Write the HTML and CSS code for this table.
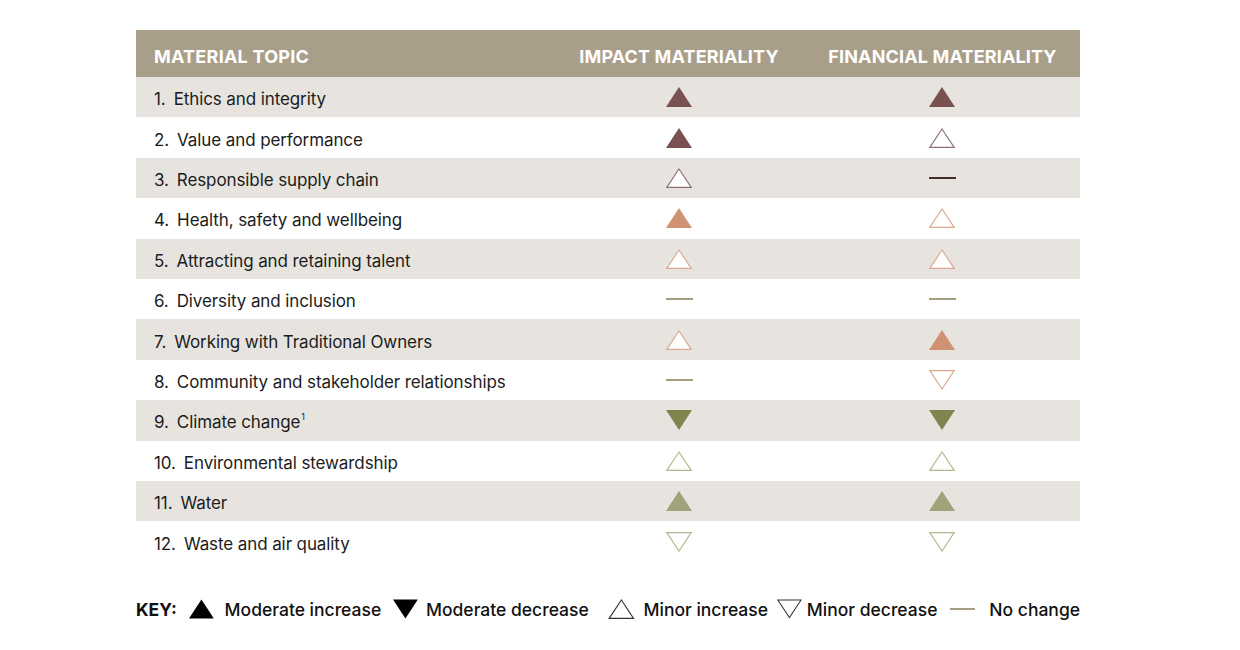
FILE: index.html
```html
<!DOCTYPE html>
<html lang="en">
<head>
<meta charset="utf-8">
<title>Material topics</title>
<link rel="stylesheet" href="styles.css">
</head>
<body>
<svg width="0" height="0" class="defs" aria-hidden="true">
  <defs>
    <symbol id="up-fill" viewBox="0 0 26 20"><polygon points="0,20 13,0 26,20" fill="currentColor"/></symbol>
    <symbol id="down-fill" viewBox="0 0 26 20"><polygon points="0,0 26,0 13,20" fill="currentColor"/></symbol>
    <symbol id="up-line" viewBox="0 0 26 20"><polygon points="0.8,19.4 13,1 25.2,19.4" fill="#fff" stroke="currentColor" stroke-width="1.1"/></symbol>
    <symbol id="down-line" viewBox="0 0 26 20"><polygon points="0.8,0.6 25.2,0.6 13,19" fill="#fff" stroke="currentColor" stroke-width="1.1"/></symbol>
  </defs>
</svg>
<div class="page">
  <div class="table">
    <div class="row head">
      <div class="topic">MATERIAL TOPIC</div>
      <div class="cell">IMPACT MATERIALITY</div>
      <div class="cell fin">FINANCIAL MATERIALITY</div>
    </div>

    <div class="row shade">
      <div class="topic"><span class="num">1.</span>Ethics and integrity</div>
      <div class="cell"><svg class="tri c-maroon"><use href="#up-fill"/></svg></div>
      <div class="cell fin"><svg class="tri c-maroon"><use href="#up-fill"/></svg></div>
    </div>
    <div class="row">
      <div class="topic"><span class="num">2.</span>Value and performance</div>
      <div class="cell"><svg class="tri c-maroon"><use href="#up-fill"/></svg></div>
      <div class="cell fin"><svg class="tri c-maroon-line"><use href="#up-line"/></svg></div>
    </div>
    <div class="row shade">
      <div class="topic"><span class="num">3.</span>Responsible supply chain</div>
      <div class="cell"><svg class="tri c-maroon-line"><use href="#up-line"/></svg></div>
      <div class="cell fin"><span class="dash d-maroon"></span></div>
    </div>
    <div class="row">
      <div class="topic"><span class="num">4.</span>Health, safety and wellbeing</div>
      <div class="cell"><svg class="tri c-salmon"><use href="#up-fill"/></svg></div>
      <div class="cell fin"><svg class="tri c-salmon-line"><use href="#up-line"/></svg></div>
    </div>
    <div class="row shade">
      <div class="topic"><span class="num">5.</span>Attracting and retaining talent</div>
      <div class="cell"><svg class="tri c-salmon-line"><use href="#up-line"/></svg></div>
      <div class="cell fin"><svg class="tri c-salmon-line"><use href="#up-line"/></svg></div>
    </div>
    <div class="row">
      <div class="topic"><span class="num">6.</span>Diversity and inclusion</div>
      <div class="cell"><span class="dash d-tan"></span></div>
      <div class="cell fin"><span class="dash d-tan"></span></div>
    </div>
    <div class="row shade">
      <div class="topic"><span class="num">7.</span>Working with Traditional Owners</div>
      <div class="cell"><svg class="tri c-salmon-line"><use href="#up-line"/></svg></div>
      <div class="cell fin"><svg class="tri c-salmon"><use href="#up-fill"/></svg></div>
    </div>
    <div class="row">
      <div class="topic"><span class="num">8.</span>Community and stakeholder relationships</div>
      <div class="cell"><span class="dash d-tan"></span></div>
      <div class="cell fin"><svg class="tri c-salmon-line"><use href="#down-line"/></svg></div>
    </div>
    <div class="row shade">
      <div class="topic"><span class="num">9.</span>Climate change<sup>1</sup></div>
      <div class="cell"><svg class="tri c-olive"><use href="#down-fill"/></svg></div>
      <div class="cell fin"><svg class="tri c-olive"><use href="#down-fill"/></svg></div>
    </div>
    <div class="row">
      <div class="topic"><span class="num">10.</span>Environmental stewardship</div>
      <div class="cell"><svg class="tri c-olive-line"><use href="#up-line"/></svg></div>
      <div class="cell fin"><svg class="tri c-olive-line"><use href="#up-line"/></svg></div>
    </div>
    <div class="row shade">
      <div class="topic"><span class="num">11.</span>Water</div>
      <div class="cell"><svg class="tri c-olive-light"><use href="#up-fill"/></svg></div>
      <div class="cell fin"><svg class="tri c-olive-light"><use href="#up-fill"/></svg></div>
    </div>
    <div class="row">
      <div class="topic"><span class="num">12.</span>Waste and air quality</div>
      <div class="cell"><svg class="tri c-olive-line"><use href="#down-line"/></svg></div>
      <div class="cell fin"><svg class="tri c-olive-line"><use href="#down-line"/></svg></div>
    </div>
  </div>

  <div class="key">
    <span class="key-label">KEY:</span>
    <svg class="tri k-tri1 c-black"><use href="#up-fill"/></svg>
    <span class="key-text kt1">Moderate increase</span>
    <svg class="tri k-tri2 c-black"><use href="#down-fill"/></svg>
    <span class="key-text kt2">Moderate decrease</span>
    <svg class="tri k-tri3 c-black-line"><use href="#up-line"/></svg>
    <span class="key-text kt3">Minor increase</span>
    <svg class="tri k-tri4 c-black-line"><use href="#down-line"/></svg>
    <span class="key-text kt4">Minor decrease</span>
    <span class="dash d-tan k-dash"></span>
    <span class="key-text kt5">No change</span>
  </div>
</div>
</body>
</html>
```
FILE: styles.css
```css
* { box-sizing: border-box; }
html, body { margin: 0; padding: 0; background: #ffffff; }
body {
  font-family: Inter, "Liberation Sans", Arial, sans-serif;
  color: #1c1c1c;
}
.defs { position: absolute; width: 0; height: 0; overflow: hidden; }

.page {
  padding: 30px 0 0 136px;
}

.table {
  width: 944px;
}

.row {
  display: grid;
  grid-template-columns: 420px 246px 278px;
  align-items: center;
  height: 40.42px;
}
.row.shade { background: #e7e4df; }

.row.head {
  height: 47px;
  padding-top: 5px;
  background: #a99e89;
  color: #ffffff;
  font-weight: 700;
  font-size: 18px;
  letter-spacing: 0.15px;
}

.topic {
  padding-left: 18px;
  padding-top: 4px;
  font-size: 17px;
  letter-spacing: -0.1px;
  white-space: nowrap;
}
.head .topic { font-size: 18px; letter-spacing: 0.25px; padding-top: 0; }

.num { margin-right: 8px; }

sup {
  font-size: 9px;
  vertical-align: top;
  position: relative;
  top: -1px;
  margin-left: 1px;
}

.cell {
  display: flex;
  justify-content: center;
  align-items: center;
  white-space: nowrap;
}
.cell.fin { padding-left: 2px; }
.head .cell.fin { padding-left: 3px; }

.tri { width: 26px; height: 20px; display: block; }

.c-maroon { color: #7a5151; }
.c-maroon-line { color: #8e7070; }
.c-salmon { color: #cf9275; }
.c-salmon-line { color: #dba78f; }
.c-olive { color: #80844f; }
.c-olive-light { color: #a0a27a; }
.c-olive-line { color: #b3b58e; }
.c-black { color: #000000; }
.c-black-line { color: #333333; }

.dash { display: block; width: 27px; height: 2px; }
.d-maroon { background: #4b2a2e; }
.d-tan { background: #a59e84; }

.key {
  display: flex;
  align-items: center;
  width: 944px;
  margin-top: 37px;
  font-size: 17.5px;
  font-weight: 500;
  letter-spacing: 0;
  color: #111111;
  white-space: nowrap;
}
.key-label { font-weight: 700; }
.k-tri1 { margin-left: 12px; }
.kt1 { margin-left: 11px; }
.k-tri2 { margin-left: 12px; }
.kt2 { margin-left: 8px; }
.k-tri3 { margin-left: 19px; width: 28px; }
.kt3 { margin-left: 9px; }
.k-tri4 { margin-left: 9px; }
.kt4 { margin-left: 5px; }
.k-dash { margin-left: 13px; width: 26px; }
.kt5 { margin-left: 14px; }
```
